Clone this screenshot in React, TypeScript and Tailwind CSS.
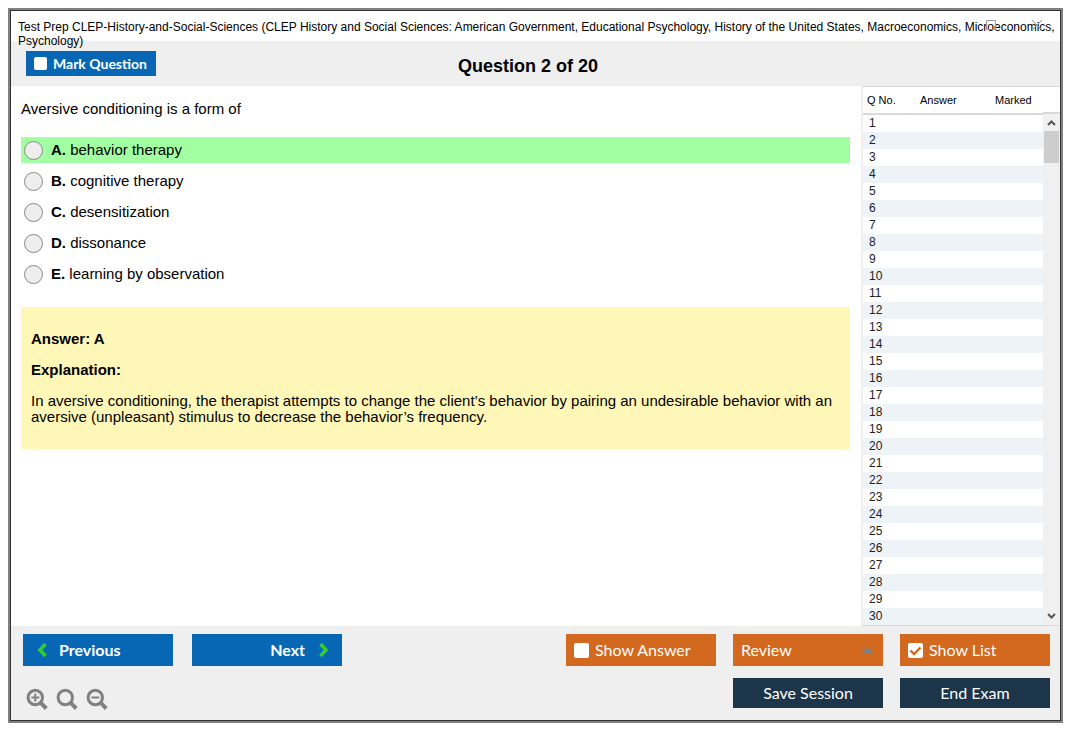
import { useState } from 'react';

const OPTIONS = [
  { key: 'A', text: 'behavior therapy' },
  { key: 'B', text: 'cognitive therapy' },
  { key: 'C', text: 'desensitization' },
  { key: 'D', text: 'dissonance' },
  { key: 'E', text: 'learning by observation' },
];

const CORRECT = 'A';
const ROWS = Array.from({ length: 30 }, (_, i) => i + 1);

type CheckProps = {
  id: string;
  label: string;
  className: string;
  boxClass: string;
  checked: boolean;
  onChange: (v: boolean) => void;
};

function CheckButton({ id, label, className, boxClass, checked, onChange }: CheckProps) {
  return (
    <label htmlFor={id} className={`flex cursor-pointer items-center gap-[6px] ${className}`}>
      <span className={`relative block shrink-0 ${boxClass}`}>
        <input
          id={id}
          type="checkbox"
          checked={checked}
          onChange={(e) => onChange(e.target.checked)}
          className="block size-full cursor-pointer appearance-none rounded-xs bg-white"
        />
        {checked && (
          <svg viewBox="0 0 15 15" className="pointer-events-none absolute inset-0 size-full" fill="none">
            <path d="M2.5 7.5 6 11l6.5-6.5" stroke="#d2691e" strokeWidth="2.4" />
          </svg>
        )}
      </span>
      {label}
    </label>
  );
}

function ZoomIcon({ kind }: { kind: 'in' | 'reset' | 'out' }) {
  return (
    <svg viewBox="0 0 22 22" className="size-[22px]" fill="none" stroke="#808080">
      <circle cx="9.3" cy="9.5" r="7.2" strokeWidth="3" />
      <path d="M14 14.2l6.3 6.3" strokeWidth="4" />
      {kind !== 'reset' && <path d="M5.3 9.5h8" strokeWidth="2" />}
      {kind === 'in' && <path d="M9.3 5.5v8" strokeWidth="2" />}
    </svg>
  );
}

function TitleBar() {
  return (
    <header className="relative z-10 h-[30px] bg-white pt-[9px] pr-1 pl-[7px]">
      <h1 className="text-xs leading-[14px]">
        Test Prep CLEP-History-and-Social-Sciences (CLEP History and Social Sciences: American Government,
        Educational Psychology, History of the United States, Macroeconomics, Microeconomics, Psychology)
      </h1>
      <div className="absolute top-2 right-[18px] flex gap-9 text-[#999]">
        <button type="button" aria-label="Minimize">
          <svg viewBox="0 0 10 12" className="h-3 w-[10px]" stroke="currentColor">
            <path d="M0 6.5h10" />
          </svg>
        </button>
        <button type="button" aria-label="Maximize">
          <svg viewBox="0 0 10 12" className="h-3 w-[10px]" fill="none" stroke="currentColor">
            <path d="M.5 1.5h9v9h-9z" />
          </svg>
        </button>
        <button type="button" aria-label="Close">
          <svg viewBox="0 0 10 12" className="h-3 w-[10px]" fill="none" stroke="currentColor">
            <path d="M0 1l10 10M10 1 0 11" />
          </svg>
        </button>
      </div>
    </header>
  );
}

function QuestionList() {
  return (
    <aside className="flex w-[199px] shrink-0 border-y border-l-2 border-y-[#d9d9d9] border-l-[#efefef]">
      <table className="flex-1 table-fixed border-collapse text-left">
        <thead>
          <tr className="h-[27px] border-b-2 border-[#d9d9d9] text-[11px] leading-4">
            <th className="w-[57px] pl-1 font-normal">Q No.</th>
            <th className="w-[75px] font-normal">Answer</th>
            <th className="font-normal">Marked</th>
          </tr>
        </thead>
        <tbody>
          {ROWS.map((n) => (
            <tr key={n} className="h-[17px] text-xs leading-[17px] text-[#222] even:bg-[#eef3f8]">
              <td className="pl-[6px]">{n}</td>
              <td />
              <td />
            </tr>
          ))}
        </tbody>
      </table>
      <div className="flex w-[17px] flex-col">
        <div className="h-[27px] border-b-2 border-[#d9d9d9]" />
        <div className="flex flex-1 flex-col items-center bg-[#f0f0f0]">
          <svg viewBox="0 0 15 17" className="h-[17px] w-[15px]" fill="none" stroke="#555" strokeWidth="2">
            <path d="M4 11l3.5-3.5L11 11" />
          </svg>
          <div className="h-8 w-[15px] bg-[#cdcdcd]" />
          <svg viewBox="0 0 15 17" className="mt-auto h-[17px] w-[15px]" fill="none" stroke="#555" strokeWidth="2">
            <path d="M4 6l3.5 3.5L11 6" />
          </svg>
        </div>
      </div>
    </aside>
  );
}

export default function App() {
  const [picked, setPicked] = useState('');
  const [marked, setMarked] = useState(false);
  const [showAnswer, setShowAnswer] = useState(false);
  const [showList, setShowList] = useState(true);

  return (
    <div className="bg-white py-2 pr-3 pl-2 font-['Liberation_Sans',Arial,sans-serif] text-black">
      <div className="border-2 border-[#808080]">
        <div className="border border-[#333]">
          <TitleBar />

          <div className="grid h-[45px] grid-cols-[1fr_auto_1fr] items-center bg-[#efefef] pr-[30px] pl-[15px]">
            <CheckButton
              id="mark"
              label="Mark Question"
              checked={marked}
              onChange={setMarked}
              boxClass="size-[13px]"
              className="h-[25px] w-[130px] bg-[#0767b5] pl-2 font-['Lato',sans-serif] text-sm font-bold text-white"
            />
            <h2 className="pt-1 text-lg font-bold">Question 2 of 20</h2>
          </div>

          <main className="flex">
            <section className="min-w-0 flex-1 pt-[15px] pr-[11px] pl-[10px] text-[15px] leading-4">
              <p>Aversive conditioning is a form of</p>

              <div className="mt-5 flex flex-col gap-[5px]">
                {OPTIONS.map((o) => (
                  <label
                    key={o.key}
                    className={`flex h-[26px] items-center gap-2 pl-[3px] ${o.key === CORRECT ? 'bg-[#a2ffa2]' : ''}`}
                  >
                    <input
                      type="radio"
                      name="answer"
                      value={o.key}
                      checked={picked === o.key}
                      onChange={() => setPicked(o.key)}
                      className="size-[19px] appearance-none rounded-full border border-[#888] bg-[#eee] checked:border-[6px]"
                    />
                    <span>
                      <b>{o.key}.</b> {o.text}
                    </span>
                  </label>
                ))}
              </div>

              <div className="mt-5 flex flex-col gap-[15px] bg-[#fff7b8] px-[10px] py-6">
                <p className="font-bold">Answer: A</p>
                <p className="font-bold">Explanation:</p>
                <p>
                  In aversive conditioning, the therapist attempts to change the client’s behavior by pairing an
                  undesirable behavior with an aversive (unpleasant) stimulus to decrease the behavior’s frequency.
                </p>
              </div>
            </section>

            {showList && <QuestionList />}
          </main>

          <footer className="flex items-start justify-between bg-[#efefef] px-[10px] pt-2 pb-[10px] pl-3 font-['Lato',sans-serif] text-base text-white">
            <div className="flex flex-col gap-[22px]">
              <div className="flex gap-[19px] font-bold">
                <button type="button" className="flex h-8 w-[150px] items-center gap-3 bg-[#0767b5] pl-[14px]">
                  <svg viewBox="0 0 10 14" className="h-[14px] w-[10px]" fill="none" stroke="#32cd32" strokeWidth="3.6">
                    <path d="M8.5 1 3 7l5.5 6" />
                  </svg>
                  Previous
                </button>
                <button
                  type="button"
                  className="flex h-8 w-[150px] items-center justify-end gap-[14px] bg-[#0767b5] pr-[13px]"
                >
                  Next
                  <svg viewBox="0 0 10 14" className="h-[14px] w-[10px]" fill="none" stroke="#32cd32" strokeWidth="3.6">
                    <path d="M1.5 1 7 7l-5.5 6" />
                  </svg>
                </button>
              </div>
              <div className="flex gap-2 pl-[3px]">
                <button type="button" aria-label="Zoom in">
                  <ZoomIcon kind="in" />
                </button>
                <button type="button" aria-label="Reset zoom">
                  <ZoomIcon kind="reset" />
                </button>
                <button type="button" aria-label="Zoom out">
                  <ZoomIcon kind="out" />
                </button>
              </div>
            </div>

            <div className="grid grid-cols-[150px_150px_150px] gap-x-[17px] gap-y-3">
              <CheckButton
                id="show-answer"
                label="Show Answer"
                checked={showAnswer}
                onChange={setShowAnswer}
                boxClass="size-[15px]"
                className="h-8 bg-[#d2691e] pl-2"
              />
              <button
                type="button"
                aria-haspopup="menu"
                className="flex h-8 items-center justify-between bg-[#d2691e] pr-[10px] pl-2"
              >
                Review
                <svg viewBox="0 0 11 6" className="h-[6px] w-[11px]" fill="#808080">
                  <path d="M0 6 5.5 0 11 6z" />
                </svg>
              </button>
              <CheckButton
                id="show-list"
                label="Show List"
                checked={showList}
                onChange={setShowList}
                boxClass="size-[15px]"
                className="h-8 bg-[#d2691e] pl-2"
              />
              <button type="button" className="col-start-2 h-[30px] bg-[#1c3549]">
                Save Session
              </button>
              <button type="button" className="h-[30px] bg-[#1c3549]">
                End Exam
              </button>
            </div>
          </footer>
        </div>
      </div>
    </div>
  );
}
